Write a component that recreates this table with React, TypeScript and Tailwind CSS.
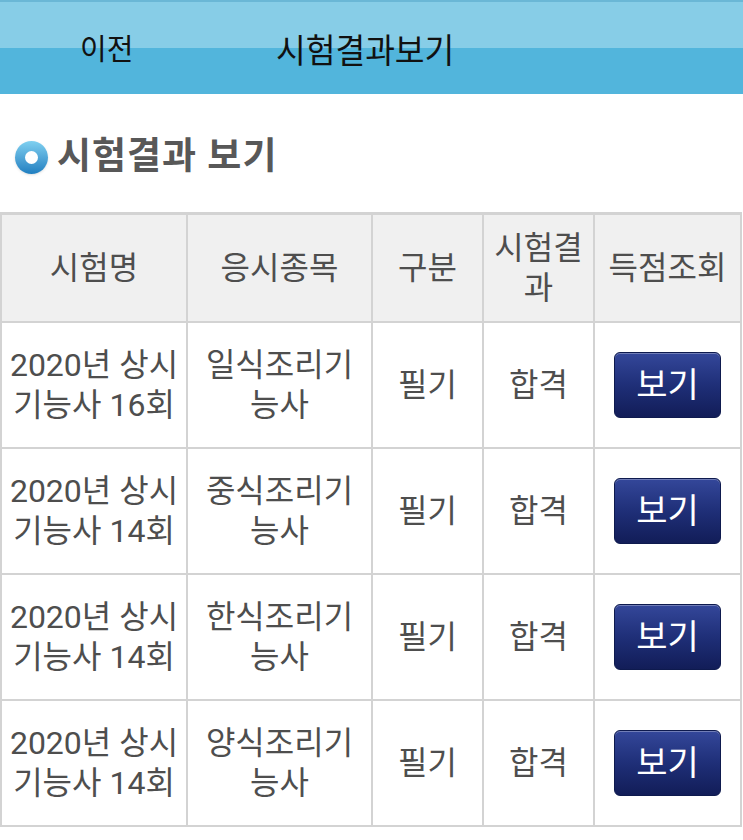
const rows = [
  { name: ["2020년 상시", "기능사 16회"], item: ["일식조리기", "능사"] },
  { name: ["2020년 상시", "기능사 14회"], item: ["중식조리기", "능사"] },
  { name: ["2020년 상시", "기능사 14회"], item: ["한식조리기", "능사"] },
  { name: ["2020년 상시", "기능사 14회"], item: ["양식조리기", "능사"] },
]

const font = { fontFamily: 'Roboto, "Noto Sans CJK KR", sans-serif' }

function Cell({ children, head }: { children: React.ReactNode; head?: boolean }) {
  return (
    <div
      className={`flex flex-col items-center justify-center text-center text-[32px] leading-[40px] text-[#4e4e4e] ${
        head ? "bg-[#f0f0f0]" : "bg-white"
      }`}
    >
      {children}
    </div>
  )
}

export default function App() {
  return (
    <div className="w-[743px] h-[840px] bg-white overflow-hidden" style={font}>
      <header className="border-t-2 border-[#6ab7d6]">
        <div className="h-[46px] bg-[#87cde7]" />
        <div className="h-[46px] bg-[#52b5dc]" />
        <div className="-mt-[92px] h-[92px] pt-[6px] flex items-center text-[#111] text-[29px]">
          <span className="ml-[80px]">이전</span>
          <span className="ml-[143px] text-[34px] scale-x-[0.95] origin-left">시험결과보기</span>
        </div>
      </header>

      <div className="h-[118px] flex items-center pl-[15px] pt-[8px]">
        <span className="w-[33px] h-[33px] rounded-full bg-gradient-to-b from-[#7fd0f0] to-[#1f7fc0] flex items-center justify-center shadow-sm">
          <span className="w-[13px] h-[13px] rounded-full bg-white" />
        </span>
        <h1 className="ml-[9px] text-[37px] font-bold text-[#585858] tracking-[1px]">시험결과 보기</h1>
      </div>

      <div className="grid grid-cols-[184px_183px_109px_109px_145px] grid-rows-[106px_124px_124px_124px_124px] gap-[2px] bg-[#d3d3d3] px-[2px] pt-[3px] pb-[2px] w-[742px]">
        <Cell head>시험명</Cell>
        <Cell head>응시종목</Cell>
        <Cell head>구분</Cell>
        <Cell head>
          <span>시험결</span>
          <span>과</span>
        </Cell>
        <Cell head>득점조회</Cell>
        {rows.map((r, i) => (
          <div key={i} className="contents">
            <Cell>
              <span>{r.name[0]}</span>
              <span>{r.name[1]}</span>
            </Cell>
            <Cell>
              <span>{r.item[0]}</span>
              <span>{r.item[1]}</span>
            </Cell>
            <Cell>필기</Cell>
            <Cell>합격</Cell>
            <Cell>
              <button className="w-[107px] h-[66px] rounded-[6px] border border-[#0e1a4e] bg-gradient-to-b from-[#34479a] via-[#1f2f78] to-[#121d58] text-white text-[34px] leading-none shadow-[inset_0_1px_0_rgba(255,255,255,0.3)]">
                보기
              </button>
            </Cell>
          </div>
        ))}
      </div>
    </div>
  )
}
